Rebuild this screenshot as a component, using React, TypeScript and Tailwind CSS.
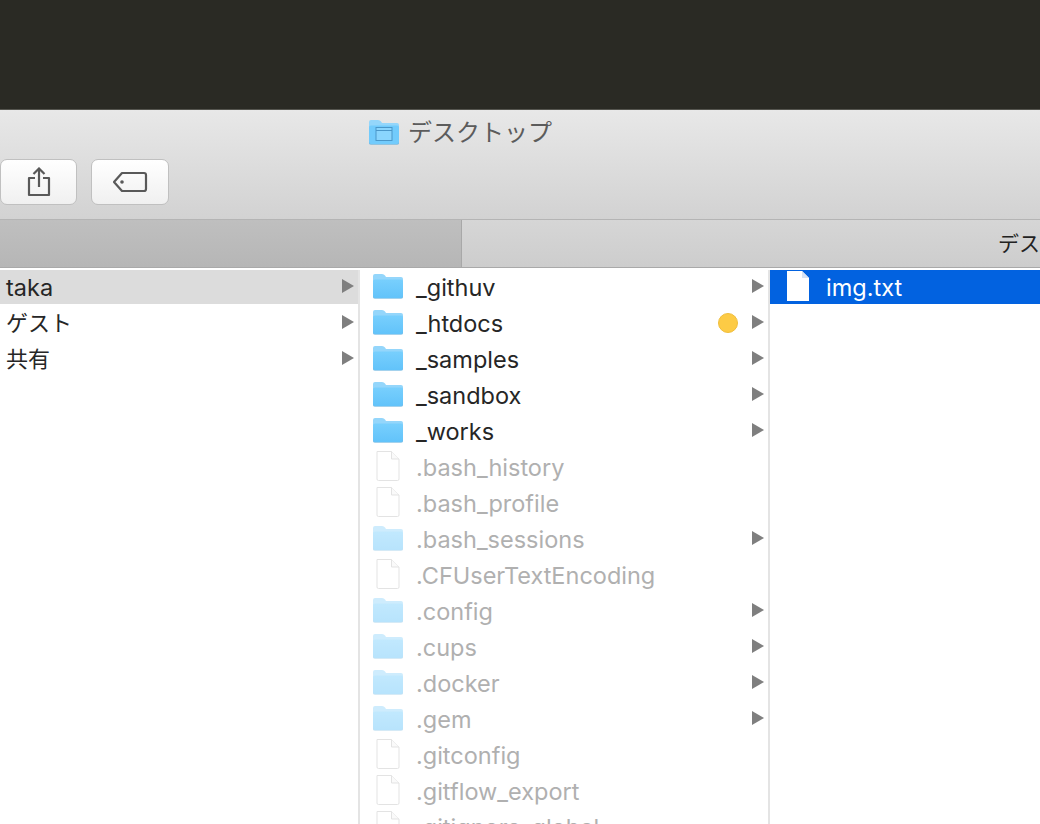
import React from "react";

const fontStack = "font-['Inter','Noto_Sans_CJK_JP',sans-serif]";

const Arrow = () => (
  <svg width="14" height="16" viewBox="0 1 14 16" className="shrink-0">
    <path d="M1 1 L13 8 L1 15 Z" fill="#7f7f7f" />
  </svg>
);

const FolderIcon = ({ dim }: { dim?: boolean }) => (
  <svg width="32" height="26" viewBox="0 1 32 26" className={`shrink-0 ${dim ? "opacity-45" : ""}`}>
    <defs>
      <linearGradient id="folderBody" x1="0" y1="0" x2="0" y2="1">
        <stop offset="0" stopColor="#78cffd" />
        <stop offset="1" stopColor="#62c3fa" />
      </linearGradient>
    </defs>
    <path
      d="M1 3 Q1 1 3 1 H10 Q12 1 13 2.5 L14 4 H29 Q31 4 31 6 V23 Q31 25 29 25 H3 Q1 25 1 23 Z"
      fill="#94d6fb"
    />
    <path d="M1 8 Q1 6.5 3 6.5 H29 Q31 6.5 31 8 V23 Q31 25 29 25 H3 Q1 25 1 23 Z" fill="url(#folderBody)" />
    <path d="M1 23 Q1 25 3 25 H29 Q31 25 31 23 V24 Q31 25.5 29 25.5 H3 Q1 25.5 1 24 Z" fill="#4aa5dc" />
  </svg>
);

const DesktopFolderIcon = () => (
  <svg width="32" height="26" viewBox="0 1 32 26" className="shrink-0">
    <path
      d="M1 3 Q1 1 3 1 H10 Q12 1 13 2.5 L14 4 H29 Q31 4 31 6 V23 Q31 25 29 25 H3 Q1 25 1 23 Z"
      fill="#94d6fb"
    />
    <path d="M1 8 Q1 6.5 3 6.5 H29 Q31 6.5 31 8 V23 Q31 25 29 25 H3 Q1 25 1 23 Z" fill="#72cbfc" />
    <path d="M1 23 Q1 25 3 25 H29 Q31 25 31 23 V24 Q31 25.5 29 25.5 H3 Q1 25.5 1 24 Z" fill="#4aa5dc" />
    <rect x="8" y="8.5" width="16" height="13" fill="#8ad5fd" stroke="#4a97c9" strokeWidth="1" />
    <path d="M8 11.5 H24" stroke="#4a97c9" strokeWidth="1" />
  </svg>
);

const FileIcon = ({ selected }: { selected?: boolean }) => (
  <svg width="26" height="32" viewBox="0 1 26 32" className="shrink-0">
    {selected ? (
      <>
        <path d="M2 1 H17 L24 8 V31 H2 Z" fill="#ffffff" />
        <path d="M17 1 V8 H24 Z" fill="#d7e3f4" />
      </>
    ) : (
      <>
        <path d="M2 1.5 H16.5 L24 9 V29 Q24 30.5 22.5 30.5 H3.5 Q2 30.5 2 29 Z" fill="#ffffff" stroke="#e3e3e3" />
        <path d="M16.5 1.5 V9 H24" fill="#fafafa" stroke="#e3e3e3" />
      </>
    )}
  </svg>
);

type Entry = { name: string; kind: "folder" | "file"; dim?: boolean; arrow?: boolean; tag?: boolean };

const entries: Entry[] = [
  { name: "_githuv", kind: "folder", arrow: true },
  { name: "_htdocs", kind: "folder", arrow: true, tag: true },
  { name: "_samples", kind: "folder", arrow: true },
  { name: "_sandbox", kind: "folder", arrow: true },
  { name: "_works", kind: "folder", arrow: true },
  { name: ".bash_history", kind: "file", dim: true },
  { name: ".bash_profile", kind: "file", dim: true },
  { name: ".bash_sessions", kind: "folder", dim: true, arrow: true },
  { name: ".CFUserTextEncoding", kind: "file", dim: true },
  { name: ".config", kind: "folder", dim: true, arrow: true },
  { name: ".cups", kind: "folder", dim: true, arrow: true },
  { name: ".docker", kind: "folder", dim: true, arrow: true },
  { name: ".gem", kind: "folder", dim: true, arrow: true },
  { name: ".gitconfig", kind: "file", dim: true },
  { name: ".gitflow_export", kind: "file", dim: true },
  { name: ".gitignore_global", kind: "file", dim: true },
];

const users = [
  { name: "taka", size: "text-[23.5px] mt-[2px]" },
  { name: "ゲスト", size: "text-[22px]" },
  { name: "共有", size: "text-[22px]" },
];

export default function App() {
  return (
    <div className={`w-[1040px] h-[824px] overflow-hidden flex flex-col bg-white ${fontStack}`}>
      {/* Desktop behind the window */}
      <div className="h-[110px] shrink-0 bg-[#2a2a24] border-b border-[#55554f]" />

      {/* Title bar + toolbar */}
      <div className="h-[110px] shrink-0 bg-gradient-to-b from-[#e8e8e8] to-[#d2d2d2] border-b border-[#b4b4b4] flex flex-col">
        <div className="h-[45px] mb-[4px] shrink-0 pl-[368px] flex items-center gap-2">
          <DesktopFolderIcon />
          <span className="text-[24px] leading-none text-[#5c5c5c] whitespace-nowrap">デスクトップ</span>
        </div>
        <div className="flex gap-[14px]">
          <button className="w-[77px] h-[46px] rounded-[7px] bg-gradient-to-b from-white to-[#f0f0f0] border border-[#c0c0c0] flex items-center justify-center">
            <svg width="24" height="30" viewBox="0 0 24 30" fill="none" stroke="#595959" strokeWidth="2.2">
              <path d="M8 11 H2 V28 H22 V11 H16" strokeLinejoin="round" />
              <path d="M12 20 V2" />
              <path d="M6.5 7 L12 1.5 L17.5 7" />
            </svg>
          </button>
          <button className="w-[78px] h-[46px] rounded-[7px] bg-gradient-to-b from-white to-[#f0f0f0] border border-[#c0c0c0] flex items-center justify-center">
            <svg width="36" height="22" viewBox="0 0 36 22" fill="none">
              <path
                d="M10 2 H32 Q34 2 34 4 V18 Q34 20 32 20 H10 L2 11 Z"
                stroke="#595959"
                strokeWidth="2.2"
                strokeLinejoin="round"
              />
              <circle cx="10" cy="11" r="1.8" fill="#595959" />
            </svg>
          </button>
        </div>
      </div>

      {/* Tab bar */}
      <div className="h-[48px] shrink-0 flex border-b border-[#a9a9a9]">
        <div className="w-[462px] shrink-0 bg-gradient-to-b from-[#bfbfbf] to-[#b6b6b6] border-r border-[#a8a8a8]" />
        <div className="flex-1 bg-gradient-to-b from-[#d6d6d6] to-[#cdcdcd] flex items-center overflow-hidden pl-[536px]">
          <span className="text-[21px] leading-none text-[#222] whitespace-nowrap">デスクトップ</span>
        </div>
      </div>

      {/* Columns */}
      <div className="flex-1 min-h-0 flex pt-[2px] overflow-hidden">
        <div className="w-[358px] shrink-0">
          {users.map((u, i) => (
            <div
              key={u.name}
              className={`h-[34px] mb-[2px] pl-[6px] pr-[3px] flex items-center justify-between ${i === 0 ? "bg-[#dcdcdc]" : ""}`}
            >
              <span className={`${u.size} text-[#262626]`}>{u.name}</span>
              <Arrow />
            </div>
          ))}
        </div>

        <div className="w-[412px] shrink-0 border-l-2 border-r-2 border-[#e4e4e4] pl-[12px]">
          {entries.map((e) => (
            <div key={e.name} className="h-[34px] mb-[2px] flex items-center pr-[3px]">
              <div className="w-[32px] flex justify-center shrink-0">
                {e.kind === "folder" ? <FolderIcon dim={e.dim} /> : <FileIcon />}
              </div>
              <span className={`ml-[12px] mt-[2px] text-[23.5px] whitespace-nowrap ${e.dim ? "text-[#b0b0b0]" : "text-[#262626]"}`}>
                {e.name}
              </span>
              <div className="ml-auto flex items-center gap-[13px]">
                {e.tag && <span className="w-[20px] h-[20px] rounded-full bg-[#fdcb45] border border-[#f0be3c]" />}
                {e.arrow && <Arrow />}
              </div>
            </div>
          ))}
        </div>

        <div className="flex-1 min-w-0">
          <div className="h-[34px] bg-[#0262e0] flex items-center pl-[15px]">
            <FileIcon selected />
            <span className="ml-[15px] mt-[2px] text-[23.5px] text-white whitespace-nowrap">img.txt</span>
          </div>
        </div>
      </div>
    </div>
  );
}
